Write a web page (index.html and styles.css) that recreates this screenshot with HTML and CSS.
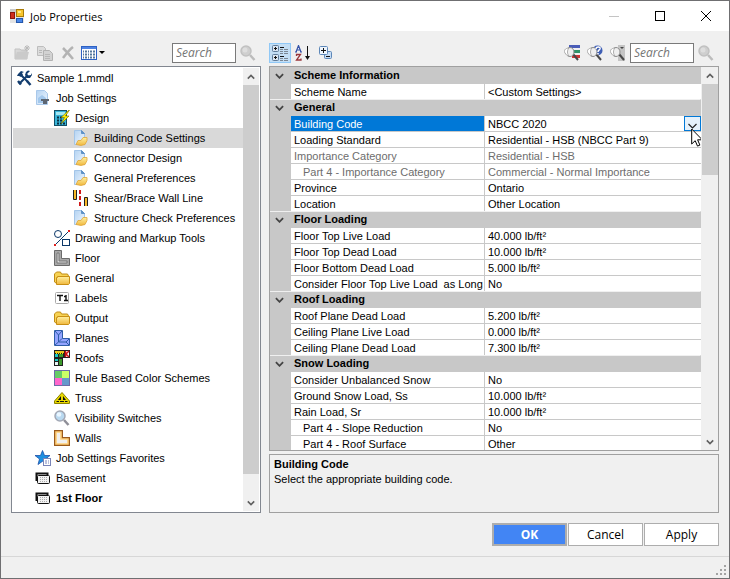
FILE: index.html
```html
<!DOCTYPE html>
<html lang="en">
<head>
    <meta charset="UTF-8">
    <meta name="viewport" content="width=device-width, initial-scale=1.0">
    <title>Job Properties</title>
    <link rel="stylesheet" href="styles.css">
</head>
<body>
    <!-- Icon definitions -->
    <svg class="icon-defs" aria-hidden="true">
        <defs>
            <linearGradient id="g-page" x1="0" y1="0" x2="1" y2="1">
                <stop offset="0" stop-color="#b4d3f2"/><stop offset="1" stop-color="#f0f7ff"/>
            </linearGradient>
            <linearGradient id="g-gold" x1="0" y1="0" x2="0" y2="1">
                <stop offset="0" stop-color="#fff0a0"/><stop offset="1" stop-color="#f0b73c"/>
            </linearGradient>
            <linearGradient id="g-grey" x1="0" y1="0" x2="1" y2="1">
                <stop offset="0" stop-color="#dedede"/><stop offset="1" stop-color="#bdbdbd"/>
            </linearGradient>
        </defs>
        <symbol id="i-app" viewBox="0 0 14 14">
            <rect width="14" height="14" fill="#c9c9c9"/>
            <path d="M6 0h8v14H0V4h6z" fill="#e4e4e4"/>
            <rect x="6.500" y=".5" width="7" height="7" fill="#f7c52c" stroke="#a97b08"/>
            <rect x="8" y="2" width="3" height="2" fill="#ffe98a"/>
            <rect x=".5" y="3.500" width="4" height="6" fill="#cf2e1c" stroke="#8d150b"/>
            <rect x="6.500" y="9.500" width="6" height="4" fill="#4a87e8" stroke="#2458ad"/>
        </symbol>
        <symbol id="i-new" viewBox="0 0 16 16">
            <path d="M1 14V4h5l1 1h6v9z" fill="url(#g-grey)" stroke="#c2c2c2"/>
            <path d="M1 14l2-7h12l-2 7z" fill="#cacaca"/>
            <path d="M13 0v6M10 3h6M11 1l4 4M15 1l-4 4" stroke="#b9b9b9" fill="none"/>
        </symbol>
        <symbol id="i-copy" viewBox="0 0 16 16">
            <path d="M.5 1.500h6l2 2v7h-8z" fill="#dcdcdc" stroke="#bdbdbd"/>
            <path d="M6.500 5.500h6l3 3v7h-9z" fill="#d2d2d2" stroke="#b2b2b2"/>
            <path d="M2 5.500h3M2 7.500h3M8 9.500h5M8 11.500h5M8 13.500h5" stroke="#b8b8b8"/>
        </symbol>
        <symbol id="i-delete" viewBox="0 0 16 16">
            <path d="M3 3c3 3 6 6 10 11M13 2C9 5 6 9 3 13" fill="none" stroke="#b3b3b3" stroke-width="2.500"/>
        </symbol>
        <symbol id="i-view" viewBox="0 0 16 14">
            <rect x=".5" y=".5" width="15" height="13" fill="#fff" stroke="#2e62c4"/>
            <rect x="1" y="1" width="14" height="2" fill="#4f83e2"/>
            <path d="M2 5.500h1M4 5.500h2M7 5.500h1M9 5.500h2M12 5.500h2M2 8.500h1M4 8.500h2M7 8.500h1M9 8.500h2M12 8.500h2M2 11.500h1M4 11.500h2M7 11.500h1M9 11.500h2M12 11.500h2" stroke="#54789c" stroke-width="2"/>
        </symbol>
        <symbol id="i-find" viewBox="0 0 16 16">
            <path d="M10 10l4.500 5" stroke="#bcbcbc" stroke-width="2.500"/>
            <circle cx="6" cy="6" r="5" fill="#cfcfcf" stroke="#c1c1c1" stroke-width="1.500"/>
            <circle cx="5" cy="5" r="2.500" fill="#dedede"/>
        </symbol>
        <symbol id="i-tools" viewBox="0 0 16 16">
            <path d="M4 4l8 8M12 5L3 14" stroke="#123c6e" stroke-width="2" fill="none"/>
            <path d="M1 6l1-2 3-3 3 1-2 1 1 2-2 2-2-1zM14 1l-3 3 1 1.500L15 5l.5-2 .5 2-2 3h-3L9 5l1-3 2-1.500z" fill="#123c6e"/>
            <path d="M11 11l3.500 4M2 11l3 3.500" stroke="#123c6e" stroke-width="2.500"/>
        </symbol>
        <symbol id="i-jobsettings" viewBox="0 0 16 16">
            <path d="M1.500 .5h8l3 3v11h-11z" fill="url(#g-page)" stroke="#a9c8ea"/>
            <path d="M3 8l4-3 4 3v5H3z" fill="#a3c8ec"/>
            <path d="M6 9h8v2h-2v3H8v-3H6z" fill="#5d6672"/>
        </symbol>
        <symbol id="i-design" viewBox="0 0 16 16">
            <rect x=".5" y=".5" width="12" height="15" fill="#38b4d8" stroke="#125068"/>
            <rect x="2" y="2" width="9" height="3" fill="#a5e6f2"/>
            <path d="M3 7.500h2M6 7.500h2M3 10.500h2M6 10.500h2M3 13.500h2M6 13.500h2M9 13.500h2" stroke="#082d40" stroke-width="2"/>
            <path d="M15 0L7 7.500h3.500L7 14l8-8h-3.500l4-6z" fill="#ffee00" stroke="#6f6a00" stroke-width=".6"/>
        </symbol>
        <symbol id="i-docfolder" viewBox="0 0 16 16">
            <path d="M1.500 .5h7l3 3v11h-10z" fill="url(#g-page)" stroke="#a3c5e8"/>
            <path d="M8.500 .5v3h3z" fill="#5f92c8" stroke="#5f92c8"/>
            <path d="M3 14.500l2-4h3l2-3h4v3l-2 4-4 1z" fill="url(#g-gold)" stroke="#e0a63a" stroke-width=".8"/>
        </symbol>
        <symbol id="i-shear" viewBox="0 0 16 16">
            <path d="M.5 0v9.500h3V0" fill="#f7b928" stroke="#222"/>
            <path d="M11.500 16V7.500h3V16" fill="#f7b928" stroke="#222"/>
            <path d="M7 0v16" stroke="#d01818" stroke-width="2" stroke-dasharray="4 2"/>
        </symbol>
        <symbol id="i-draw" viewBox="0 0 16 16">
            <circle cx="4" cy="4" r="3.500" fill="#fff" stroke="#0b3768"/>
            <rect x="8.500" y="9.500" width="7" height="6" fill="#fff" stroke="#0b3768"/>
            <path d="M1 15L15 1" stroke="#0b3768"/>
            <path d="M0 14h2v2H0zM14 0h2v2h-2z" fill="#e02020"/>
        </symbol>
        <symbol id="i-floor" viewBox="0 0 16 16">
            <path d="M.5 .5h7v8h8v7H.5z" fill="#a8a8a8" stroke="#6b6b6b"/>
            <path d="M3 3h2v8h8v2H3z" fill="#dcdcdc" stroke="#777"/>
        </symbol>
        <symbol id="i-folder" viewBox="0 0 16 14">
            <path d="M.5 11V3l2-2h4l1 2h6l1 2v7H2z" fill="#f7d354" stroke="#c18c16"/>
            <path d="M2.500 13.500V6.500h1v-1h12v7l-1 1z" fill="url(#g-gold)" stroke="#c98f14"/>
        </symbol>
        <symbol id="i-labels" viewBox="0 0 16 16">
            <rect x="1.500" y="2.500" width="13" height="11" rx="1" fill="#fff" stroke="#aaa"/>
            <path d="M3 5.500h6M6 5v6M10 6.500h2M12 5v6M10 10.500h4" stroke="#111" stroke-width="1.400"/>
        </symbol>
        <symbol id="i-planes" viewBox="0 0 16 16">
            <path d="M.5 .5h8v8h7v7H.5z" fill="#93a4ff" stroke="#2e5da8"/>
            <path d="M1 1l3.500 4L8 1M4.500 5v7H12M1 15l3.500-3L8 8.500M12 12l3-3M12 12l3 3" fill="none" stroke="#2e5da8"/>
        </symbol>
        <symbol id="i-roofs" viewBox="0 0 16 16">
            <path d="M0 0h16v8H9v8H0z" fill="#202020"/>
            <path d="M1 1h9v2H1z" fill="#e6c31b"/>
            <path d="M1 4h3v3H1zM1 9h3v2H1z" fill="#19c6c6"/>
            <path d="M5 4h4v3H5zM5 9h3v6H5z" fill="#3c9a2b"/>
            <path d="M1 12h3v3H1z" fill="#e8f4f4"/>
            <path d="M11 1h4v6h-4z" fill="#fff"/>
            <path d="M15 1l-3 3 3 3M11.500 1v6" stroke="#d01010" fill="none" stroke-width="1.500"/>
            <path d="M2 3.500h7" stroke="#ffe600" stroke-dasharray="1 1"/>
        </symbol>
        <symbol id="i-rules" viewBox="0 0 16 16">
            <rect width="16" height="16" fill="#6e6ca8"/>
            <path d="M1 1h7v7H1z" fill="#66cc66"/><path d="M8 1h7v7H8z" fill="#ccff66"/>
            <path d="M1 8h7v7H1z" fill="#ff66cc"/><path d="M8 8h7v7H8z" fill="#6699cc"/>
        </symbol>
        <symbol id="i-truss" viewBox="0 0 16 12">
            <path d="M8 .5L15.500 9v2.500H.5V9z" fill="#e8d800" stroke="#8c8200"/>
            <path d="M7 4v4H4zM9 4v4h3zM2 10l1-1h2v1zM11 9h2l1 1h-3zM6 9h4v1H6z" fill="#111"/>
        </symbol>
        <symbol id="i-visible" viewBox="0 0 16 16">
            <path d="M10 10l4.500 5" stroke="#8f8f98" stroke-width="2.500"/>
            <circle cx="6" cy="6" r="5" fill="#b9d9f0" stroke="#a3a8b5" stroke-width="1.500"/>
            <circle cx="5" cy="4.500" r="2.300" fill="#e9f6ff"/>
        </symbol>
        <symbol id="i-walls" viewBox="0 0 16 16">
            <path d="M2 2h5v7h7v5H2z" fill="none" stroke="#9a5a1c" stroke-width="4"/>
            <path d="M2 2h5v7h7v5H2z" fill="#f0f0f0" stroke="#ffcf78" stroke-width="1.600"/>
        </symbol>
        <symbol id="i-favorites" viewBox="0 0 16 16">
            <path d="M7.500 .5l2 5h5.500l-4.500 3.500 1.500 5.500-4.500-3.200L3 14.500l1.500-5.500L0 5.500h5.500z" fill="#1e90e0" stroke="#1c4fa8" stroke-width=".8"/>
            <rect x="8.500" y="8.500" width="7" height="7" fill="#fff" stroke="#7a84b8"/>
            <path d="M10 11h2M13 11h1M10 13h2M13 13h1" stroke="#7a84b8"/>
        </symbol>
        <symbol id="i-level" viewBox="0 0 16 12">
            <path d="M1.500 9V1.500h11V3" fill="#fff" stroke="#111" stroke-width="2"/>
            <rect x="2.500" y="3.500" width="12" height="8" rx="1" fill="#f2f2f2" stroke="#111"/>
            <path d="M5 5.500h8M5 7.500h8M5 9.500h8" stroke="#aaa" stroke-dasharray="1 1"/>
        </symbol>
        <symbol id="i-categorized" viewBox="0 0 16 16">
            <rect x=".5" y=".5" width="6" height="6" rx="1" fill="#dbe6f2" stroke="#5f7b99"/>
            <rect x=".5" y="9.500" width="6" height="6" rx="1" fill="#dbe6f2" stroke="#5f7b99"/>
            <path d="M2 3.500h3M3.500 2v3M2 12.500h3M3.500 11v3" stroke="#111"/>
            <path d="M8 2.500h4M8 11.500h4" stroke="#111"/>
            <path d="M8 4.500h3M12 4.500h4M8 6.500h3M12 6.500h4M8 8.500h3M12 8.500h4M8 13.500h3M12 13.500h4M8 15.500h3M12 15.500h4" stroke="#7b8794"/>
        </symbol>
        <symbol id="i-sort" viewBox="0 0 16 16">
            <path d="M1 7l2.500-6.500L6 7M2 5h3M0 7h2M5 7h2" fill="none" stroke="#3653a8" stroke-width="1.200"/>
            <path d="M1.500 11V9.500h4L1.500 15h4.500v-1.500" fill="none" stroke="#99363b" stroke-width="1.300"/>
            <path d="M12.500 1v13" stroke="#111"/><path d="M10 11h5l-2.500 4z" fill="#111"/>
        </symbol>
        <symbol id="i-expand" viewBox="0 0 14 14">
            <rect x="5.500" y="5.500" width="7" height="7" rx="1" fill="#c6dcf4" stroke="#5d87b8"/>
            <rect x=".5" y=".5" width="8" height="8" rx="1" fill="#eef5fd" stroke="#5d87b8"/>
            <path d="M2 4.500h5M4.500 2v5M7 10.500h4" stroke="#111"/>
        </symbol>
        <symbol id="i-lens" viewBox="0 0 16 16">
            <path d="M9 9l5 6" stroke="#484848" stroke-width="2"/>
            <ellipse cx="6" cy="7" rx="4" ry="4.500" fill="#efefef" stroke="#8b8b8b"/>
            <path d="M5 3C1 3-.5 6 1 8s2 3 4 3C3 9 3 5 5 3z" fill="#fff" stroke="#9a9a9a" stroke-width=".8"/>
        </symbol>
        <symbol id="i-findlist" viewBox="0 0 16 16">
            <path d="M5 1.500h11" stroke="#4b5db8" stroke-width="3"/><path d="M8 6.500h8" stroke="#2f9468" stroke-width="3"/>
            <path d="M8 11.500h8" stroke="#cc3535" stroke-width="3"/>
            <use href="#i-lens"/>
        </symbol>
        <symbol id="i-findhelp" viewBox="0 0 16 16">
            <circle cx="10.500" cy="5.500" r="5" fill="#3f5fb5"/>
            <use href="#i-lens"/>
            <path d="M9 4c0-3 5-2.500 4 0-.5 1-2 1-2 3M11 8v1.500" stroke="#fff" fill="none" stroke-width="1.500"/>
        </symbol>
        <symbol id="i-findcolumn" viewBox="0 0 16 16">
            <rect x="8" width="7" height="16" fill="#c4c4c4"/>
            <path d="M10 2h4l-2 2z" fill="#444"/>
            <use href="#i-lens"/>
        </symbol>
        <symbol id="i-down" viewBox="0 0 10 6">
            <path d="M1 1l4 4 4-4" fill="none" stroke="currentColor" stroke-width="2"/>
        </symbol>
        <symbol id="i-up" viewBox="0 0 10 6">
            <path d="M1 5l4-4 4 4" fill="none" stroke="currentColor" stroke-width="2"/>
        </symbol>
    </svg>

    <div class="window">
        <header class="titlebar">
            <svg class="app-icon"><use href="#i-app"/></svg>
            <h1>Job Properties</h1>
            <button class="win-btn" aria-label="Minimize" disabled>
                <svg viewBox="0 0 12 12"><path d="M1 6.500h10" stroke="#c4c4c4"/></svg>
            </button>
            <button class="win-btn" aria-label="Maximize">
                <svg viewBox="0 0 12 12"><rect x="1.500" y="1.500" width="9" height="9" fill="none" stroke="#000"/></svg>
            </button>
            <button class="win-btn" aria-label="Close">
                <svg viewBox="0 0 12 12"><path d="M1 1l10 10M11 1L1 11" stroke="#000"/></svg>
            </button>
        </header>

        <main class="panes">
            <section class="pane">
                <div class="toolbar">
                    <button class="tool" aria-label="New" disabled><svg><use href="#i-new"/></svg></button>
                    <button class="tool" aria-label="Copy" disabled><svg><use href="#i-copy"/></svg></button>
                    <button class="tool" aria-label="Delete" disabled><svg><use href="#i-delete"/></svg></button>
                    <button class="tool tool-menu" aria-label="View"><svg><use href="#i-view"/></svg><span class="caret"></span></button>
                    <input class="search push" type="text" placeholder="Search" aria-label="Search settings">
                    <button class="tool" aria-label="Find setting" disabled><svg><use href="#i-find"/></svg></button>
                </div>
                <div class="box tree-box">
                    <ul class="tree">
                        <li><a href="#"><svg><use href="#i-tools"/></svg>Sample 1.mmdl</a></li>
                        <li class="level-1"><a href="#"><svg><use href="#i-jobsettings"/></svg>Job Settings</a></li>
                        <li class="level-2"><a href="#"><svg><use href="#i-design"/></svg>Design</a></li>
                        <li class="level-3 selected"><a href="#"><svg><use href="#i-docfolder"/></svg>Building Code Settings</a></li>
                        <li class="level-3"><a href="#"><svg><use href="#i-docfolder"/></svg>Connector Design</a></li>
                        <li class="level-3"><a href="#"><svg><use href="#i-docfolder"/></svg>General Preferences</a></li>
                        <li class="level-3"><a href="#"><svg><use href="#i-shear"/></svg>Shear/Brace Wall Line</a></li>
                        <li class="level-3"><a href="#"><svg><use href="#i-docfolder"/></svg>Structure Check Preferences</a></li>
                        <li class="level-2"><a href="#"><svg><use href="#i-draw"/></svg>Drawing and Markup Tools</a></li>
                        <li class="level-2"><a href="#"><svg><use href="#i-floor"/></svg>Floor</a></li>
                        <li class="level-2"><a href="#"><svg><use href="#i-folder"/></svg>General</a></li>
                        <li class="level-2"><a href="#"><svg><use href="#i-labels"/></svg>Labels</a></li>
                        <li class="level-2"><a href="#"><svg><use href="#i-folder"/></svg>Output</a></li>
                        <li class="level-2"><a href="#"><svg><use href="#i-planes"/></svg>Planes</a></li>
                        <li class="level-2"><a href="#"><svg><use href="#i-roofs"/></svg>Roofs</a></li>
                        <li class="level-2"><a href="#"><svg><use href="#i-rules"/></svg>Rule Based Color Schemes</a></li>
                        <li class="level-2"><a href="#"><svg><use href="#i-truss"/></svg>Truss</a></li>
                        <li class="level-2"><a href="#"><svg><use href="#i-visible"/></svg>Visibility Switches</a></li>
                        <li class="level-2"><a href="#"><svg><use href="#i-walls"/></svg>Walls</a></li>
                        <li class="level-1"><a href="#"><svg><use href="#i-favorites"/></svg>Job Settings Favorites</a></li>
                        <li class="level-1"><a href="#"><svg><use href="#i-level"/></svg>Basement</a></li>
                        <li class="level-1 current"><a href="#"><svg><use href="#i-level"/></svg>1st Floor</a></li>
                    </ul>
                    <div class="scrollbar">
                        <button aria-label="Scroll up"><svg><use href="#i-up"/></svg></button>
                        <div class="track"><div class="thumb thumb-tree"></div></div>
                        <button aria-label="Scroll down"><svg><use href="#i-down"/></svg></button>
                    </div>
                </div>
            </section>

            <section class="pane">
                <div class="toolbar">
                    <button class="tool active" aria-label="Categorized"><svg><use href="#i-categorized"/></svg></button>
                    <button class="tool" aria-label="Alphabetical"><svg><use href="#i-sort"/></svg></button>
                    <button class="tool" aria-label="Expand all"><svg class="small"><use href="#i-expand"/></svg></button>
                    <button class="tool push" aria-label="Search names"><svg><use href="#i-findlist"/></svg></button>
                    <button class="tool" aria-label="Search help"><svg><use href="#i-findhelp"/></svg></button>
                    <button class="tool" aria-label="Search values"><svg><use href="#i-findcolumn"/></svg></button>
                    <input class="search" type="text" placeholder="Search" aria-label="Search properties">
                    <button class="tool" aria-label="Find property" disabled><svg><use href="#i-find"/></svg></button>
                </div>
                <div class="box grid-box">
                    <div class="grid-view">
                        <table class="properties">
                            <colgroup><col class="col-gutter"><col class="col-name"><col></colgroup>
                            <tbody>
                                <tr class="group"><td><svg><use href="#i-down"/></svg></td><th colspan="2">Scheme Information</th></tr>
                                <tr><td></td><th>Scheme Name</th><td>&lt;Custom Settings&gt;</td></tr>
                            </tbody>
                            <tbody>
                                <tr class="group"><td><svg><use href="#i-down"/></svg></td><th colspan="2">General</th></tr>
                                <tr class="selected">
                                    <td></td>
                                    <th><label for="code">Building Code</label></th>
                                    <td>
                                        <div class="editor">
                                            <select id="code"><option>NBCC 2020</option></select>
                                            <span class="drop"><svg viewBox="0 0 9 6"><path d="M.5 1l4 4 4-4" fill="none" stroke="#222" stroke-width="1.200"/></svg></span>
                                            <svg class="pointer" viewBox="0 0 12 19"><path d="M.7 1v15l3.500-3.300 2.300 5.400 2.400-1-2.300-5.300h4.700z" fill="#fff" stroke="#000"/></svg>
                                        </div>
                                    </td>
                                </tr>
                                <tr><td></td><th>Loading Standard</th><td>Residential - HSB (NBCC Part 9)</td></tr>
                                <tr class="readonly"><td></td><th>Importance Category</th><td>Residential - HSB</td></tr>
                                <tr class="readonly child"><td></td><th>Part 4 - Importance Category</th><td>Commercial - Normal Importance</td></tr>
                                <tr><td></td><th>Province</th><td>Ontario</td></tr>
                                <tr><td></td><th>Location</th><td>Other Location</td></tr>
                            </tbody>
                            <tbody>
                                <tr class="group"><td><svg><use href="#i-down"/></svg></td><th colspan="2">Floor Loading</th></tr>
                                <tr><td></td><th>Floor Top Live Load</th><td>40.000 lb/ft²</td></tr>
                                <tr><td></td><th>Floor Top Dead Load</th><td>10.000 lb/ft²</td></tr>
                                <tr><td></td><th>Floor Bottom Dead Load</th><td>5.000 lb/ft²</td></tr>
                                <tr><td></td><th>Consider Floor Top Live Load&nbsp; as Long</th><td>No</td></tr>
                            </tbody>
                            <tbody>
                                <tr class="group"><td><svg><use href="#i-down"/></svg></td><th colspan="2">Roof Loading</th></tr>
                                <tr><td></td><th>Roof Plane Dead Load</th><td>5.200 lb/ft²</td></tr>
                                <tr><td></td><th>Ceiling Plane Live Load</th><td>0.000 lb/ft²</td></tr>
                                <tr><td></td><th>Ceiling Plane Dead Load</th><td>7.300 lb/ft²</td></tr>
                            </tbody>
                            <tbody>
                                <tr class="group"><td><svg><use href="#i-down"/></svg></td><th colspan="2">Snow Loading</th></tr>
                                <tr><td></td><th>Consider Unbalanced Snow</th><td>No</td></tr>
                                <tr><td></td><th>Ground Snow Load, Ss</th><td>10.000 lb/ft²</td></tr>
                                <tr><td></td><th>Rain Load, Sr</th><td>10.000 lb/ft²</td></tr>
                                <tr class="child"><td></td><th>Part 4 - Slope Reduction</th><td>No</td></tr>
                                <tr class="child"><td></td><th>Part 4 - Roof Surface</th><td>Other</td></tr>
                            </tbody>
                        </table>
                    </div>
                    <div class="scrollbar">
                        <button aria-label="Scroll up"><svg><use href="#i-up"/></svg></button>
                        <div class="track"><div class="thumb thumb-grid"></div></div>
                        <button aria-label="Scroll down"><svg><use href="#i-down"/></svg></button>
                    </div>
                </div>
                <div class="description">
                    <h2>Building Code</h2>
                    <p>Select the appropriate building code.</p>
                </div>
            </section>
        </main>

        <div class="actions">
            <button class="btn btn-primary">OK</button>
            <button class="btn">Cancel</button>
            <button class="btn">Apply</button>
        </div>

        <footer class="statusbar">
            <svg viewBox="0 0 12 12"><path d="M9 1h2v2H9zM5 5h2v2H5zM9 5h2v2H9zM1 9h2v2H1zM5 9h2v2H5zM9 9h2v2H9z" fill="#a3a3a3"/></svg>
        </footer>
    </div>
</body>
</html>
```
FILE: styles.css
```css
* {
    box-sizing: border-box;
}

body {
    margin: 0;
    font-family: "Liberation Sans", Arial, sans-serif;
    font-size: 11px;
    color: #000;
}

button, input, select {
    font: inherit;
    color: inherit;
    padding: 0;
    margin: 0;
}

svg {
    display: block;
    flex: none;
    width: 16px;
    height: 16px;
}

.icon-defs {
    position: absolute;
    width: 0;
    height: 0;
}

.window {
    display: flex;
    flex-direction: column;
    height: 100vh;
    background: #f0f0f0;
    border: 1px solid #6f6f71;
}

/* title bar */
.titlebar {
    display: flex;
    align-items: center;
    height: 30px;
    padding-left: 9px;
    background: #fff;
}

.app-icon {
    width: 14px;
    height: 14px;
}

.titlebar h1 {
    flex: 1;
    margin: 0 0 0 6px;
    font: 11px "Open Sans", sans-serif;
}

.win-btn {
    display: flex;
    align-items: center;
    justify-content: center;
    width: 46px;
    height: 30px;
    background: none;
    border: 0;
}

.win-btn svg {
    width: 12px;
    height: 12px;
}

/* panes */
.panes {
    display: grid;
    grid-template-columns: 5fr 9fr;
    gap: 8px;
    flex: 1;
    min-height: 0;
    padding: 0 10px;
}

.pane {
    display: flex;
    flex-direction: column;
    min-width: 0;
    min-height: 0;
}

.toolbar {
    display: flex;
    align-items: center;
    gap: 1px;
    height: 35px;
    padding: 8px 2px 0 0;
}

.tool {
    display: flex;
    align-items: center;
    justify-content: center;
    width: 22px;
    height: 20px;
    background: none;
    border: 0;
}

.tool.active {
    background: #c3def5;
    border: 1px solid #90c8f6;
}

.tool svg.small {
    width: 14px;
    height: 14px;
}

.tool-menu {
    width: 26px;
    gap: 2px;
}

.caret {
    border: 3px solid transparent;
    border-top-color: #000;
    border-bottom: 0;
}

.push {
    margin-left: auto;
}

.search {
    width: 64px;
    height: 20px;
    padding: 0 3px;
    background: #fff;
    border: 1px solid #7a7a7a;
    font: italic 12px "Open Sans", sans-serif;
}

.search::placeholder {
    color: #757575;
}

.box {
    display: flex;
    flex: 1;
    min-height: 0;
    background: #fff;
    border: 1px solid #828790;
}

.tree-box {
    padding: 1px;
}

/* settings tree */
.tree {
    flex: 1;
    min-width: 0;
    margin: 0;
    padding: 0;
    overflow: hidden;
    list-style: none;
}

.tree a {
    display: flex;
    align-items: center;
    gap: 5px;
    height: 20px;
    padding-left: 3px;
    color: #000;
    text-decoration: none;
    white-space: nowrap;
}

.tree .level-1 a {
    padding-left: 22px;
}

.tree .level-2 a {
    padding-left: 41px;
}

.tree .level-3 a {
    padding-left: 60px;
}

.tree .selected {
    background: #d9d9d9;
}

.tree .current {
    font-weight: bold;
}

/* scrollbars */
.scrollbar {
    display: flex;
    flex-direction: column;
    flex: none;
    width: 16px;
    background: #f0f0f0;
}

.scrollbar button {
    display: flex;
    align-items: center;
    justify-content: center;
    height: 17px;
    background: none;
    border: 0;
    color: #606060;
}

.scrollbar svg {
    width: 8px;
    height: 6px;
}

.track {
    flex: 1;
}

.thumb {
    background: #cdcdcd;
}

.thumb-tree {
    height: 95%;
}

.thumb-grid {
    height: 26%;
}

/* property grid */
.grid-box {
    border-color: #a0a0a0;
}

.grid-view {
    flex: 1;
    min-width: 0;
    overflow: hidden;
    border-right: 1px solid #f0f0f0;
}

.properties {
    width: 100%;
    table-layout: fixed;
    border-collapse: separate;
    border-spacing: 0;
}

.col-gutter {
    width: 21px;
}

.col-name {
    width: 194px;
}

.properties th,
.properties td {
    height: 16px;
    padding: 2px 0 0 3px;
    border-top: 1px solid #c8c8c8;
    line-height: 13px;
    font-weight: normal;
    text-align: left;
    white-space: nowrap;
    overflow: hidden;
}

.properties th {
    border-right: 1px solid #c8c8c8;
}

.properties td:first-child {
    padding: 0 0 0 5px;
    background: #c8c8c8;
}

.properties td svg {
    width: 9px;
    height: 6px;
    color: #444;
}

.properties .group th {
    padding-top: 0;
    background: #c8c8c8;
    line-height: 15px;
    font-weight: bold;
}

.properties tbody + tbody .group td,
.properties tbody + tbody .group th {
    border-top-color: #f0f0f0;
}

.properties .selected th {
    background: #0078d7;
    color: #fff;
}

.properties .selected td:last-child {
    padding-top: 0;
    overflow: visible;
}

.properties .readonly {
    color: #6d6d6d;
}

.properties .child th {
    padding-left: 12px;
}

.editor {
    position: relative;
    display: flex;
    height: 15px;
}

.editor select {
    flex: 1;
    padding-top: 2px;
    appearance: none;
    background: #fff;
    border: 0;
}

.editor .drop {
    display: flex;
    align-items: flex-end;
    justify-content: center;
    width: 17px;
    padding-bottom: 1px;
    background: #e5f1fb;
    border: 1px solid #0078d7;
}

.properties .editor .pointer {
    position: absolute;
    right: -2px;
    top: 12px;
    width: 12px;
    height: 19px;
    z-index: 1;
}

/* description */
.description {
    height: 59px;
    margin-top: 3px;
    padding: 2px 4px;
    border: 1px solid #a0a0a0;
}

.description h2,
.description p {
    margin: 0;
    font-size: 11px;
    line-height: 15px;
}

/* bottom buttons */
.actions {
    display: flex;
    justify-content: flex-end;
    gap: 1px;
    padding: 10px;
}

.btn {
    width: 75px;
    height: 23px;
    background: #fff;
    border: 1px solid #adadad;
    font: 12px "Open Sans", sans-serif;
}

.btn-primary {
    background: #4285f4;
    border-width: 2px;
    color: #fff;
    font-weight: bold;
}

.statusbar {
    display: flex;
    align-items: flex-end;
    justify-content: flex-end;
    height: 22px;
    padding: 2px;
    border-top: 1px solid #d7d7d7;
}

.statusbar svg {
    width: 12px;
    height: 12px;
}
```
